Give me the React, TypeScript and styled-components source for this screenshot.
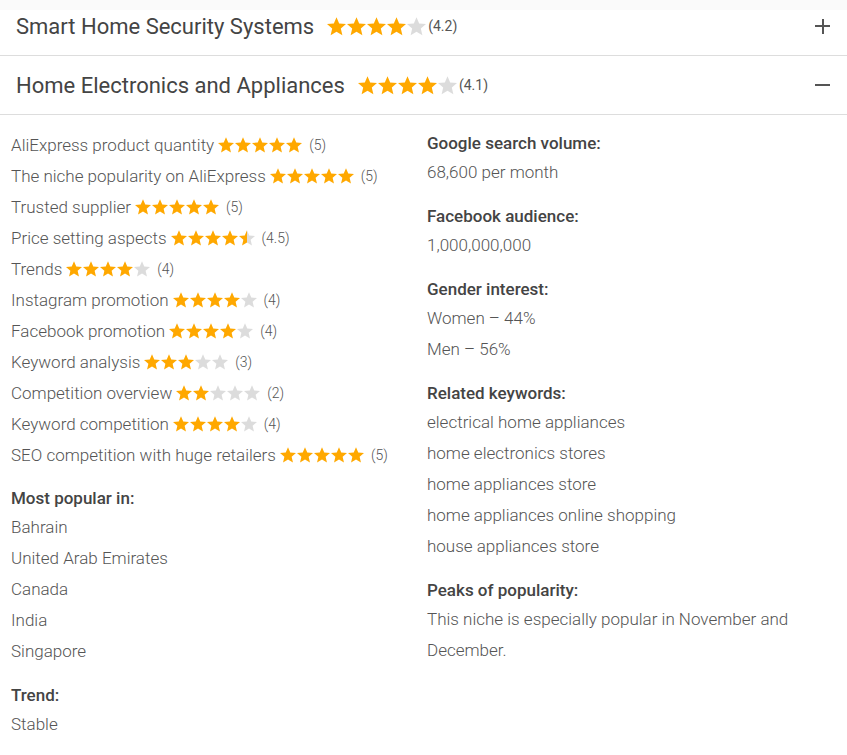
import styled, { createGlobalStyle } from "styled-components";
import { useId } from "react";

const GlobalStyle = createGlobalStyle`
  body {
    margin: 0;
    background: #fff;
    font-family: Roboto, "Liberation Sans", sans-serif;
    color: #555;
  }
`;

const Page = styled.div`
  width: 847px;
  margin-top: -3px;
`;

const Header = styled.div<{ $band?: boolean }>`
  height: 58px;
  display: flex;
  align-items: center;
  padding: 0 17px 0 16px;
  border-bottom: 1px solid #ddd;
  background: ${(p) =>
    p.$band ? "linear-gradient(#fafafa 0 13px, #fff 13px)" : "#fff"};
`;

const Title = styled.h2`
  margin: 0 13px 0 0;
  font-size: 22px;
  font-weight: 400;
  color: #444;
`;

const Score = styled.span<{ $big?: boolean }>`
  font-size: 14px;
  color: #555;
  margin-left: ${(p) => (p.$big ? "2px" : "7px")};
`;

const Toggle = styled.span<{ $open?: boolean }>`
  margin-left: auto;
  width: 15px;
  height: 15px;
  position: relative;
  &::before,
  &::after {
    content: "";
    position: absolute;
    background: #555;
  }
  &::before {
    left: 0;
    right: 0;
    top: 6.5px;
    height: 2px;
  }
  &::after {
    display: ${(p) => (p.$open ? "none" : "block")};
    top: 0;
    bottom: 0;
    left: 6.5px;
    width: 2px;
  }
`;

const Body = styled.div`
  display: grid;
  grid-template-columns: 416px 1fr;
  padding: 14px 11px 20px 11px;
`;

const Column = styled.div<{ $offset?: number }>`
  display: flex;
  flex-direction: column;
  padding-top: ${(p) => p.$offset ?? 0}px;
`;

const Row = styled.div`
  display: flex;
  align-items: center;
  height: 31px;
  font-size: 17px;
  font-weight: 300;
  color: #555;
  white-space: nowrap;
`;

const RowLabel = styled.span`
  margin-right: 4px;
`;

const Group = styled.div`
  & + & {
    margin-top: 15px;
  }
`;

const Stack = styled.div`
  margin-top: 15px;
`;

const Label = styled.div`
  font-size: 17px;
  font-weight: 500;
  color: #444;
  line-height: 27px;
`;

const Value = styled.div`
  font-size: 17px;
  font-weight: 300;
  color: #555;
  line-height: 31px;
`;

const Stars = styled.span<{ $gap: number }>`
  display: inline-flex;
  align-items: center;
  gap: ${(p) => p.$gap}px;
`;

const STAR =
  "M12 17.27L18.18 21l-1.64-7.03L22 9.24l-7.19-.61L12 2 9.19 8.63 2 9.24l5.46 4.73L5.82 21z";

function Star({ fill, size }: { fill: number; size: number }) {
  const id = useId();
  return (
    <svg width={size} height={size} viewBox="2 2 20 19.5">
      <defs>
        <linearGradient id={id}>
          <stop offset={fill} stopColor="#ffa800" />
          <stop offset={fill} stopColor="#dcdcdc" />
        </linearGradient>
      </defs>
      <path d={STAR} fill={`url(#${id})`} />
    </svg>
  );
}

function Rating({ value, size, gap }: { value: number; size: number; gap: number }) {
  return (
    <Stars $gap={gap}>
      {[0, 1, 2, 3, 4].map((i) => (
        <Star key={i} size={size} fill={Math.max(0, Math.min(1, value - i))} />
      ))}
    </Stars>
  );
}

const ratings: [string, number, string][] = [
  ["AliExpress product quantity", 5, "5"],
  ["The niche popularity on AliExpress", 5, "5"],
  ["Trusted supplier", 5, "5"],
  ["Price setting aspects", 4.5, "4.5"],
  ["Trends", 4, "4"],
  ["Instagram promotion", 4, "4"],
  ["Facebook promotion", 4, "4"],
  ["Keyword analysis", 3, "3"],
  ["Competition overview", 2, "2"],
  ["Keyword competition", 4, "4"],
  ["SEO competition with huge retailers", 5, "5"],
];

const leftGroups: [string, string[]][] = [
  ["Most popular in:", ["Bahrain", "United Arab Emirates", "Canada", "India", "Singapore"]],
  ["Trend:", ["Stable"]],
];

const rightGroups: [string, string[]][] = [
  ["Google search volume:", ["68,600 per month"]],
  ["Facebook audience:", ["1,000,000,000"]],
  ["Gender interest:", ["Women – 44%", "Men – 56%"]],
  [
    "Related keywords:",
    [
      "electrical home appliances",
      "home electronics stores",
      "home appliances store",
      "home appliances online shopping",
      "house appliances store",
    ],
  ],
  ["Peaks of popularity:", ["This niche is especially popular in November and December."]],
];

function Groups({ items }: { items: [string, string[]][] }) {
  return (
    <>
      {items.map(([label, values]) => (
        <Group key={label}>
          <Label>{label}</Label>
          {values.map((v) => (
            <Value key={v}>{v}</Value>
          ))}
        </Group>
      ))}
    </>
  );
}

export default function App() {
  return (
    <Page>
      <GlobalStyle />
      <Header $band>
        <Title>Smart Home Security Systems</Title>
        <Rating value={4} size={19} gap={1} />
        <Score $big>(4.2)</Score>
        <Toggle />
      </Header>
      <Header>
        <Title>Home Electronics and Appliances</Title>
        <Rating value={4} size={19} gap={1} />
        <Score $big>(4.1)</Score>
        <Toggle $open />
      </Header>
      <Body>
        <Column>
          {ratings.map(([label, value, text]) => (
            <Row key={label}>
              <RowLabel>{label}</RowLabel>
              <Rating value={value} size={16} gap={1} />
              <Score>({text})</Score>
            </Row>
          ))}
          <Stack>
            <Groups items={leftGroups} />
          </Stack>
        </Column>
        <Column $offset={1}>
          <Groups items={rightGroups} />
        </Column>
      </Body>
    </Page>
  );
}
